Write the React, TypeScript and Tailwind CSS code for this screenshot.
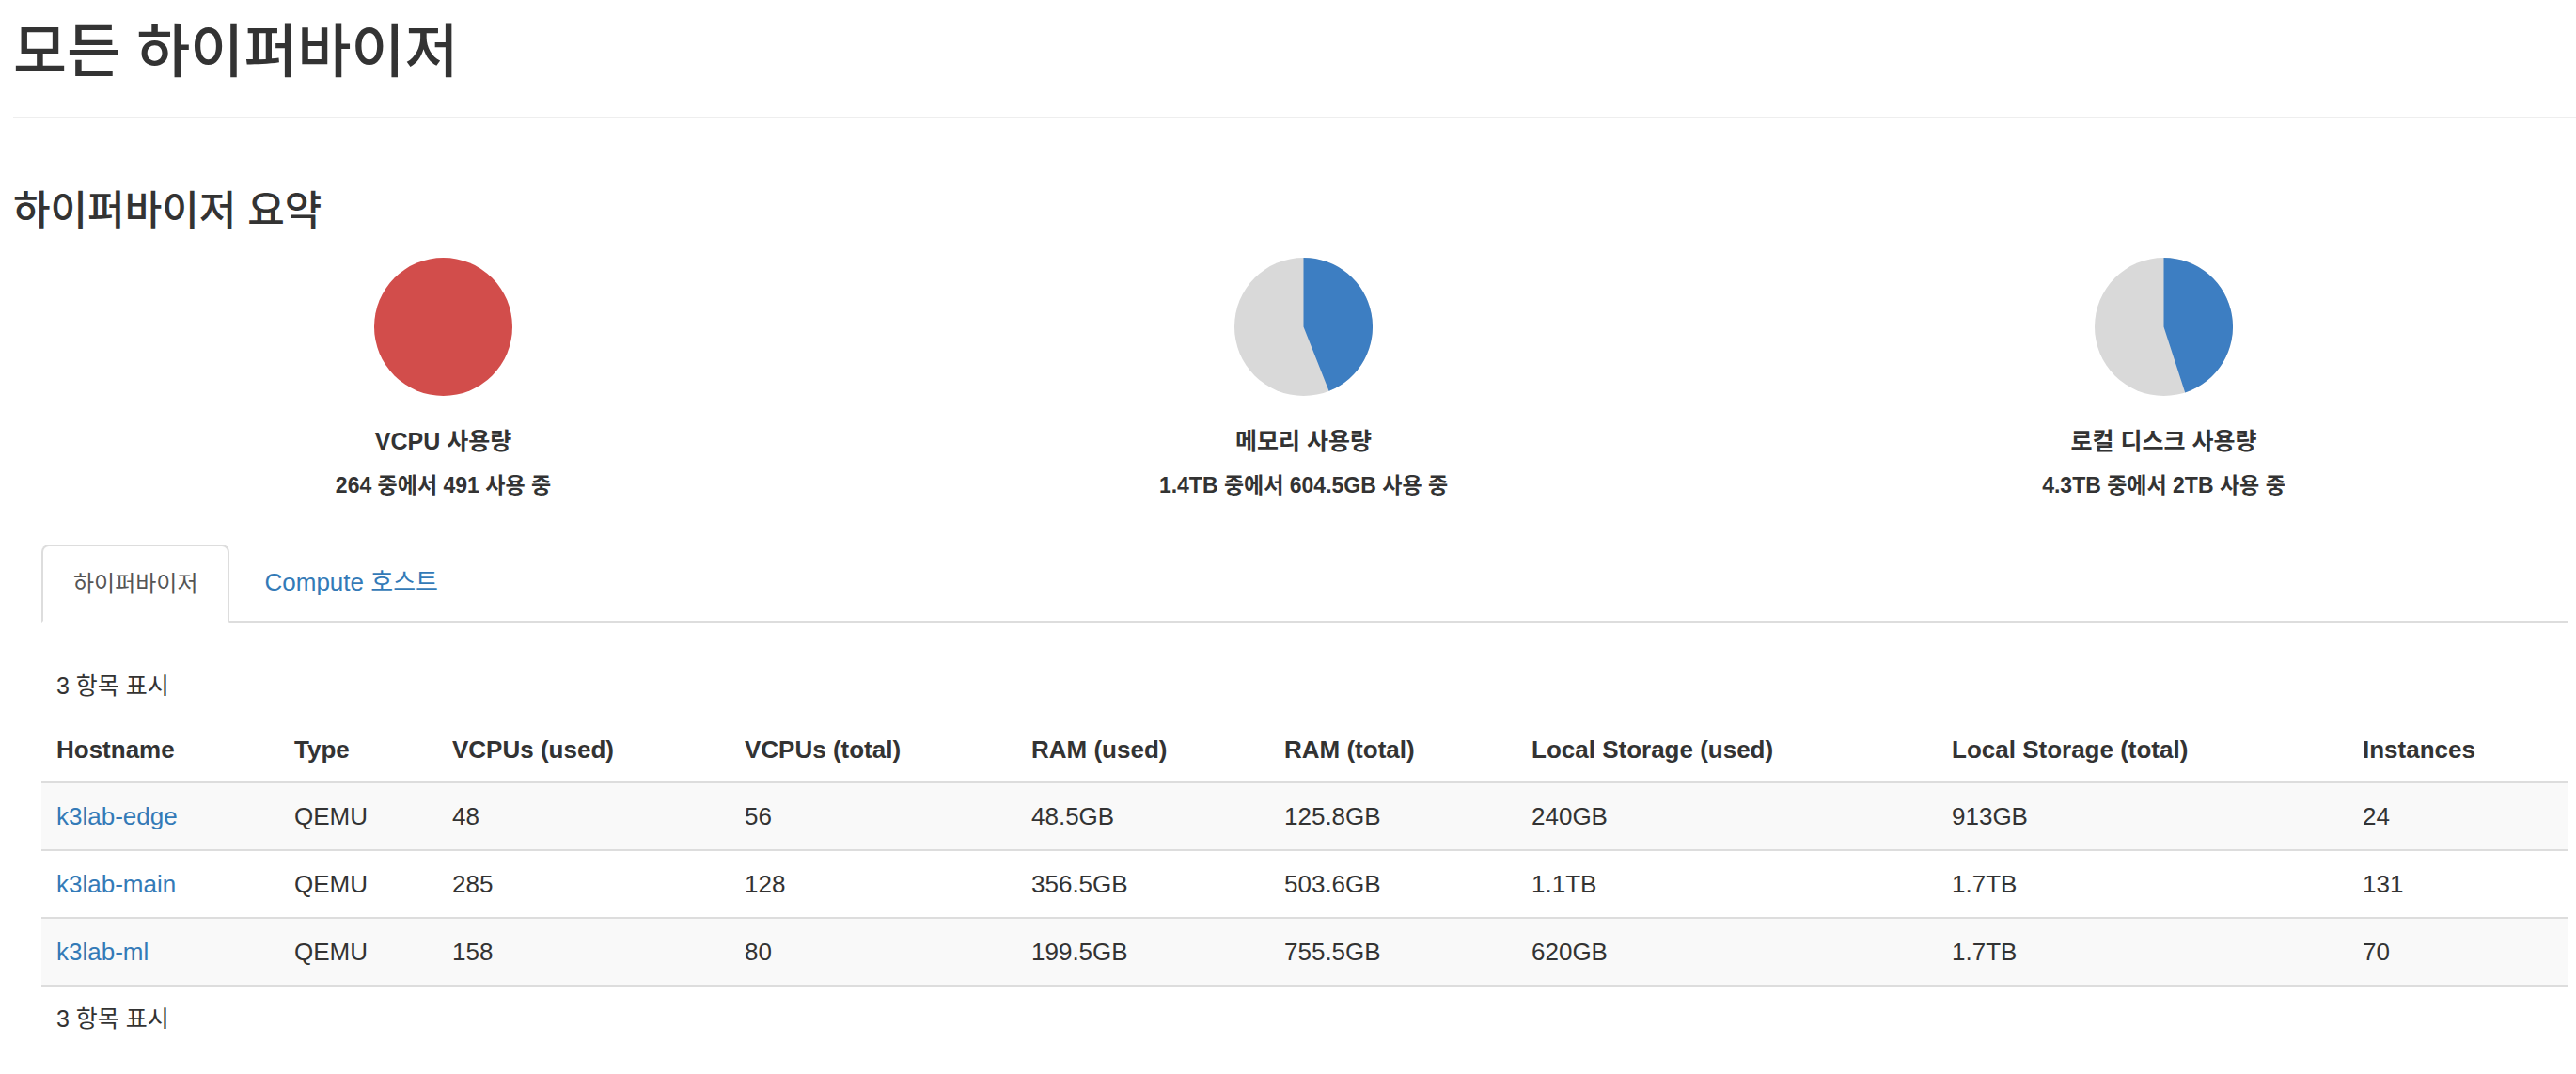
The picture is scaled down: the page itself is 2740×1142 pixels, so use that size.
import React from 'react';

type Hypervisor = {
  hostname: string;
  type: string;
  vcpusUsed: number;
  vcpusTotal: number;
  ramUsed: string;
  ramTotal: string;
  storageUsed: string;
  storageTotal: string;
  instances: number;
};

const hypervisors: Hypervisor[] = [
  { hostname: 'k3lab-edge', type: 'QEMU', vcpusUsed: 48, vcpusTotal: 56, ramUsed: '48.5GB', ramTotal: '125.8GB', storageUsed: '240GB', storageTotal: '913GB', instances: 24 },
  { hostname: 'k3lab-main', type: 'QEMU', vcpusUsed: 285, vcpusTotal: 128, ramUsed: '356.5GB', ramTotal: '503.6GB', storageUsed: '1.1TB', storageTotal: '1.7TB', instances: 131 },
  { hostname: 'k3lab-ml', type: 'QEMU', vcpusUsed: 158, vcpusTotal: 80, ramUsed: '199.5GB', ramTotal: '755.5GB', storageUsed: '620GB', storageTotal: '1.7TB', instances: 70 },
];

const headers = [
  'Hostname',
  'Type',
  'VCPUs (used)',
  'VCPUs (total)',
  'RAM (used)',
  'RAM (total)',
  'Local Storage (used)',
  'Local Storage (total)',
  'Instances',
];

const summary = [
  { title: 'VCPU 사용량', detail: '264 중에서 491 사용 중', fraction: 491 / 264 },
  { title: '메모리 사용량', detail: '1.4TB 중에서 604.5GB 사용 중', fraction: 0.44 },
  { title: '로컬 디스크 사용량', detail: '4.3TB 중에서 2TB 사용 중', fraction: 0.45 },
];

// same column widths for header and body rows
const rowGrid = 'grid grid-cols-[253px_168px_311px_305px_269px_263px_447px_437px_234px]';

const Pie: React.FC<{ fraction: number }> = ({ fraction }) => {
  const r = 73.5;
  const c = 73.5;

  if (fraction >= 1) {
    return (
      <svg width="147" height="147" viewBox="0 0 147 147">
        <circle cx={c} cy={c} r={r} fill="#d24d4b" />
      </svg>
    );
  }

  const angle = fraction * 2 * Math.PI;
  const x = c + r * Math.sin(angle);
  const y = c - r * Math.cos(angle);
  const largeArc = fraction > 0.5 ? 1 : 0;

  return (
    <svg width="147" height="147" viewBox="0 0 147 147">
      <circle cx={c} cy={c} r={r} fill="#d9d9d9" />
      <path d={`M${c} ${c} L${c} ${c - r} A${r} ${r} 0 ${largeArc} 1 ${x} ${y} Z`} fill="#3d7ec2" />
    </svg>
  );
};

const App: React.FC = () => {
  return (
    <div className="min-h-screen overflow-hidden bg-white pl-[14px] text-[#333] font-['Liberation_Sans','Noto_Sans_CJK_KR',sans-serif]">
      <div className="pt-[21px] pb-[33px] border-b-2 border-[#eee]">
        <h1 className="text-[62px] leading-[70px] font-medium">모든 하이퍼바이저</h1>
      </div>

      <h2 className="mt-[74px] text-[43px] leading-[48px] font-medium">하이퍼바이저 요약</h2>

      <div className="mt-[26px] flex">
        {summary.map((item) => (
          <div key={item.title} className="w-[915px] shrink-0 flex flex-col items-center">
            <Pie fraction={item.fraction} />
            <div className="mt-[32px] text-[25px] leading-[32px] font-bold">{item.title}</div>
            <div className="mt-[16px] text-[23px] leading-[30px] font-bold">{item.detail}</div>
          </div>
        ))}
      </div>

      <div className="mt-[48px] pl-[30px] pr-[9px]">
        <ul className="flex border-b-2 border-[#ddd]">
          <li className="-mb-[2px] h-[83px] flex items-center px-[32px] border-2 border-[#ddd] border-b-white rounded-t-[8px] bg-white text-[24px] text-[#555]">
            하이퍼바이저
          </li>
          <li className="ml-[4px] h-[81px] flex items-center px-[33px] text-[26px] text-[#337ab7]">
            <a href="#">Compute 호스트</a>
          </li>
        </ul>

        <div className="mt-[51px] pl-[16px] text-[25px] leading-[32px]">3 항목 표시</div>

        <div className="mt-[19px] text-[26px] leading-[37px]">
          <div className={`${rowGrid} h-[69px] items-center border-b-[3px] border-[#ddd] font-bold`}>
            {headers.map((h) => (
              <div key={h} className="px-[16px] whitespace-nowrap">{h}</div>
            ))}
          </div>
          {hypervisors.map((hv, i) => (
            <div
              key={hv.hostname}
              className={`${rowGrid} h-[72px] items-center border-b-2 border-[#ddd] ${i % 2 === 0 ? 'bg-[#f9f9f9]' : 'bg-white'}`}
            >
              <div className="px-[16px]">
                <a href="#" className="text-[#337ab7]">{hv.hostname}</a>
              </div>
              <div className="px-[16px]">{hv.type}</div>
              <div className="px-[16px]">{hv.vcpusUsed}</div>
              <div className="px-[16px]">{hv.vcpusTotal}</div>
              <div className="px-[16px]">{hv.ramUsed}</div>
              <div className="px-[16px]">{hv.ramTotal}</div>
              <div className="px-[16px]">{hv.storageUsed}</div>
              <div className="px-[16px]">{hv.storageTotal}</div>
              <div className="px-[16px]">{hv.instances}</div>
            </div>
          ))}
        </div>

        <div className="mt-[18px] pl-[16px] text-[25px] leading-[32px]">3 항목 표시</div>
      </div>
    </div>
  );
};

export default App;
